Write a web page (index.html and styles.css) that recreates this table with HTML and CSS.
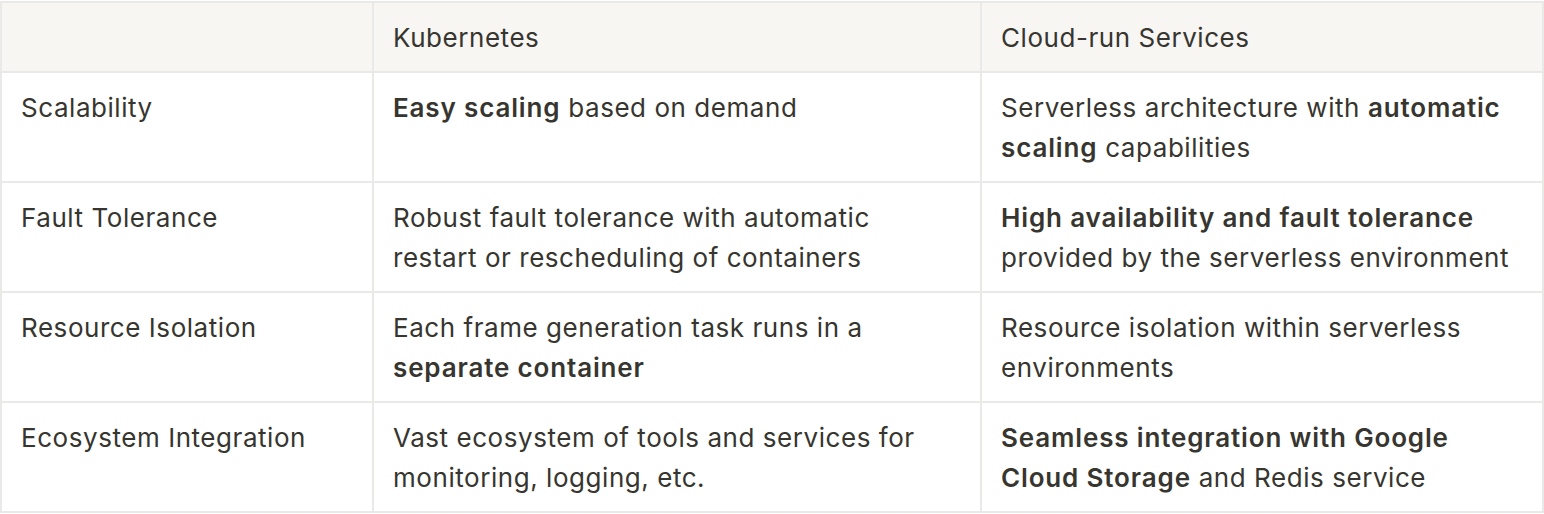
FILE: index.html
```html
<!DOCTYPE html>
<html>
<head>
<meta charset="utf-8">
<link rel="stylesheet" href="styles.css">
</head>
<body>
<div class="table">
  <div class="cell head"></div>
  <div class="cell head">Kubernetes</div>
  <div class="cell head">Cloud-run Services</div>

  <div class="cell">Scalability</div>
  <div class="cell"><b>Easy scaling</b> based on demand</div>
  <div class="cell">Serverless architecture with <b>automatic scaling</b> capabilities</div>

  <div class="cell">Fault Tolerance</div>
  <div class="cell">Robust fault tolerance with automatic restart or rescheduling of containers</div>
  <div class="cell"><b>High availability and fault tolerance</b> provided by the serverless environment</div>

  <div class="cell">Resource Isolation</div>
  <div class="cell">Each frame generation task runs in a <b>separate container</b></div>
  <div class="cell">Resource isolation within serverless environments</div>

  <div class="cell">Ecosystem Integration</div>
  <div class="cell">Vast ecosystem of tools and services for monitoring, logging, etc.</div>
  <div class="cell"><b>Seamless integration with Google Cloud Storage</b> and Redis service</div>
</div>
</body>
</html>
```
FILE: styles.css
```css
html, body {
  margin: 0;
  padding: 0;
  background: #ffffff;
}
body {
  font-family: Inter, "Noto Sans", sans-serif;
  font-size: 26px;
  line-height: 40px;
  letter-spacing: 0.55px;
  color: #37352f;
}
.table {
  display: grid;
  grid-template-columns: 370px 606px 1fr;
  gap: 2px;
  padding: 2px;
  margin-top: 1px;
  background: #e9e9e7;
  width: 1544px;
  box-sizing: border-box;
}
.cell {
  background: #ffffff;
  padding: 15px 20px 13px 19px;
  min-height: 80px;
}
.cell.head {
  background: #f7f6f3;
  min-height: 40px;
}
b {
  font-weight: 600;
  letter-spacing: 0.85px;
}
```
